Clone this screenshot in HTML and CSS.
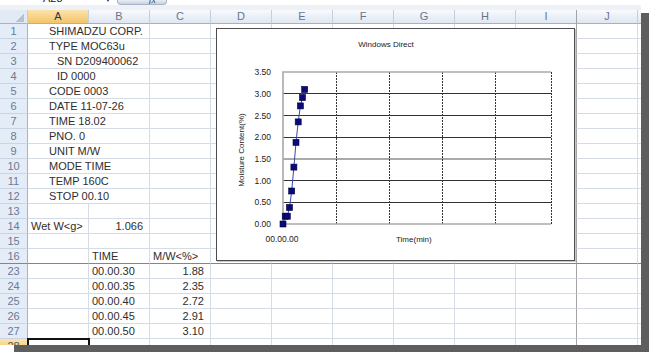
FILE: index.html
```html
<!DOCTYPE html>
<html lang="ja">
<head>
  <meta charset="UTF-8" />
  <title>MOC63u - Excel</title>
  <link rel="stylesheet" href="styles.css">
</head>
<body>

<div class="window">
  <div class="formula-bar">
    <span class="name-box">A28</span>
    <span class="name-arrow">▼</span>
    <span class="fx-btn"><i>fx</i></span>
  </div>

  <table class="grid">
    <colgroup>
      <col class="c-hdr"><col span="10" class="c-col"><col class="c-rest">
    </colgroup>
    <thead>
      <tr><th class="corner"></th><th class="sel">A</th><th>B</th><th>C</th><th>D</th><th>E</th><th>F</th><th>G</th><th>H</th><th>I</th><th>J</th><th></th></tr>
    </thead>
    <tbody>
      <tr><th>1</th><td colspan="2" class="ind">SHIMADZU CORP.</td><td></td><td></td><td></td><td></td><td></td><td></td><td></td><td></td><td></td></tr>
      <tr><th>2</th><td colspan="2" class="ind">TYPE MOC63u</td><td></td><td></td><td></td><td></td><td></td><td></td><td></td><td></td><td></td></tr>
      <tr><th>3</th><td colspan="2" class="ind2">SN D209400062</td><td></td><td></td><td></td><td></td><td></td><td></td><td></td><td></td><td></td></tr>
      <tr><th>4</th><td colspan="2" class="ind2">ID 0000</td><td></td><td></td><td></td><td></td><td></td><td></td><td></td><td></td><td></td></tr>
      <tr><th>5</th><td colspan="2" class="ind">CODE 0003</td><td></td><td></td><td></td><td></td><td></td><td></td><td></td><td></td><td></td></tr>
      <tr><th>6</th><td colspan="2" class="ind">DATE 11-07-26</td><td></td><td></td><td></td><td></td><td></td><td></td><td></td><td></td><td></td></tr>
      <tr><th>7</th><td colspan="2" class="ind">TIME 18.02</td><td></td><td></td><td></td><td></td><td></td><td></td><td></td><td></td><td></td></tr>
      <tr><th>8</th><td colspan="2" class="ind">PNO. 0</td><td></td><td></td><td></td><td></td><td></td><td></td><td></td><td></td><td></td></tr>
      <tr><th>9</th><td colspan="2" class="ind">UNIT M/W</td><td></td><td></td><td></td><td></td><td></td><td></td><td></td><td></td><td></td></tr>
      <tr><th>10</th><td colspan="2" class="ind">MODE TIME</td><td></td><td></td><td></td><td></td><td></td><td></td><td></td><td></td><td></td></tr>
      <tr><th>11</th><td colspan="2" class="ind">TEMP 160C</td><td></td><td></td><td></td><td></td><td></td><td></td><td></td><td></td><td></td></tr>
      <tr><th>12</th><td colspan="2" class="ind">STOP 00.10</td><td></td><td></td><td></td><td></td><td></td><td></td><td></td><td></td><td></td></tr>
      <tr><th>13</th><td></td><td></td><td></td><td></td><td></td><td></td><td></td><td></td><td></td><td></td><td></td></tr>
      <tr><th>14</th><td>Wet W&lt;g&gt;</td><td class="num">1.066</td><td></td><td></td><td></td><td></td><td></td><td></td><td></td><td></td><td></td></tr>
      <tr><th>15</th><td></td><td></td><td></td><td></td><td></td><td></td><td></td><td></td><td></td><td></td><td></td></tr>
      <tr class="split"><th>16</th><td></td><td>TIME</td><td>M/W&lt;%&gt;</td><td></td><td></td><td></td><td></td><td></td><td></td><td></td><td></td></tr>
      <tr><th>23</th><td></td><td>00.00.30</td><td class="num">1.88</td><td></td><td></td><td></td><td></td><td></td><td></td><td></td><td></td></tr>
      <tr><th>24</th><td></td><td>00.00.35</td><td class="num">2.35</td><td></td><td></td><td></td><td></td><td></td><td></td><td></td><td></td></tr>
      <tr><th>25</th><td></td><td>00.00.40</td><td class="num">2.72</td><td></td><td></td><td></td><td></td><td></td><td></td><td></td><td></td></tr>
      <tr><th>26</th><td></td><td>00.00.45</td><td class="num">2.91</td><td></td><td></td><td></td><td></td><td></td><td></td><td></td><td></td></tr>
      <tr><th>27</th><td></td><td>00.00.50</td><td class="num">3.10</td><td></td><td></td><td></td><td></td><td></td><td></td><td></td><td></td></tr>
      <tr><th class="sel">28</th><td class="active"></td><td></td><td></td><td></td><td></td><td></td><td></td><td></td><td></td><td></td><td></td></tr>
    </tbody>
  </table>

  <!-- embedded chart floats over columns D..I -->
  <div class="chart">
    <svg width="357" height="231" viewBox="0 0 357 231">
      <text class="title" x="169" y="18">Windows Direct</text>

      <!-- horizontal grid -->
      <g class="hgrid">
        <line x1="66" y1="64.5" x2="334" y2="64.5"/>
        <line x1="66" y1="86.5" x2="334" y2="86.5"/>
        <line x1="66" y1="108.5" x2="334" y2="108.5"/>
        <line x1="66" y1="151.5" x2="334" y2="151.5"/>
        <line x1="66" y1="173.5" x2="334" y2="173.5"/>
      </g>
      <line class="hgrid-soft" x1="66" y1="130" x2="334" y2="130"/>

      <!-- vertical dashed grid -->
      <g class="vgrid">
        <line x1="119.5" y1="43" x2="119.5" y2="195"/>
        <line x1="172.5" y1="43" x2="172.5" y2="195"/>
        <line x1="225.5" y1="43" x2="225.5" y2="195"/>
        <line x1="278.5" y1="43" x2="278.5" y2="195"/>
        <line x1="334.5" y1="43" x2="334.5" y2="195"/>
      </g>

      <!-- plot frame -->
      <polyline class="frame" points="334,43 66,43 66,195 334,195"/>

      <g class="ylab">
        <text x="54" y="46">3.50</text>
        <text x="54" y="68">3.00</text>
        <text x="54" y="90">2.50</text>
        <text x="54" y="111">2.00</text>
        <text x="54" y="133">1.50</text>
        <text x="54" y="155">1.00</text>
        <text x="54" y="176">0.50</text>
        <text x="54" y="198">0.00</text>
      </g>

      <text class="xlab" x="65" y="213">00.00.00</text>
      <text class="axis" x="179" y="213">Time(min)</text>
      <text class="axis ytitle" transform="translate(27 121) rotate(-90)">Moisture Content(%)</text>

      <polyline class="series" points="66,195 68.2,187.2 70.3,187.2 72.5,178.5 74.7,162 76.9,138.1 79,113.4 81.2,92.9 83.4,76.9 85.5,68.6 87.7,60.4"/>
      <g class="marks">
        <rect x="63" y="192" width="6" height="6"/>
        <rect x="65.2" y="184.2" width="6" height="6"/>
        <rect x="67.3" y="184.2" width="6" height="6"/>
        <rect x="69.5" y="175.5" width="6" height="6"/>
        <rect x="71.7" y="159" width="6" height="6"/>
        <rect x="73.9" y="135.1" width="6" height="6"/>
        <rect x="76" y="110.4" width="6" height="6"/>
        <rect x="78.2" y="89.9" width="6" height="6"/>
        <rect x="80.4" y="73.9" width="6" height="6"/>
        <rect x="82.5" y="65.6" width="6" height="6"/>
        <rect x="84.7" y="57.4" width="6" height="6"/>
      </g>
    </svg>
  </div>
</div>

</body>
</html>
```

FILE: styles.css
```css
* { box-sizing: border-box; margin: 0; padding: 0; }
body { background: #fff; font-family: "Liberation Sans", Arial, sans-serif; width: 649px; height: 352px; overflow: hidden; }

/* sheet window with its dark drop shadow on right/bottom */
.window { position: relative; width: 641px; height: 345px; background: #fff; overflow: hidden; box-shadow: 11px 10px 0 -3px #5e5e5e; }

/* formula bar, mostly scrolled off the top */
.formula-bar { height: 10px; display: flex; align-items: flex-start; overflow: hidden; background: linear-gradient(#fff 0 5px, #eef1f6 5px); }
.name-box { margin: -8px 0 0 43px; font-size: 11px; line-height: 12px; color: #222; width: 60px; }
.name-arrow { margin: -4px 0 0 2px; font-size: 6px; line-height: 8px; color: #222; width: 12px; }
.fx-btn { width: 50px; height: 5px; border: 1px solid #a9b5c6; border-top: none; border-radius: 0 0 4px 4px; background: linear-gradient(#e8edf4, #c8d2df); display: flex; justify-content: flex-end; overflow: hidden; }
.fx-btn i { font-family: "Liberation Serif", serif; font-size: 10px; line-height: 6px; margin: -3px 10px 0 0; color: #445; }

/* grid */
.grid { border-collapse: separate; border-spacing: 0; table-layout: fixed; width: 650px; font-size: 11px; color: #2e2e2e; }
.c-hdr { width: 28px; }
.c-col { width: 61px; }
.c-rest { width: 12px; }
.grid th, .grid td { height: 15px; padding: 0 3px; line-height: 14px; white-space: nowrap; overflow: visible; font-weight: normal; text-align: left; border-right: 1px solid #d6dce6; border-bottom: 1px solid #d6dce6; }
.grid thead th { height: 14px; line-height: 13px; text-align: center; color: #66758d; background: linear-gradient(#f8fafd, #dfe7f2); border-right: 1px solid #c4cfdc; border-bottom: 1px solid #9fb3c9; }
.grid thead th.sel { background: linear-gradient(#fbe3ad, #f3c46a); color: #333; }
.grid thead th.corner { background: #e2eaf5 linear-gradient(135deg, transparent 50%, #b5c2d3 50%) no-repeat right 3px bottom 1px / 9px 9px; }
.grid tbody th { padding: 0; text-align: center; color: #6a7a95; background: #e4ecf7; border-right: 1px solid #9fb3c9; border-bottom: 1px solid #c9d5e3; }
.grid tbody th.sel { background: linear-gradient(#fbe3ad, #f3c46a); color: #555; }
.grid th:nth-last-child(3), .grid td:nth-last-child(3) { border-right-color: #a3a3a3; }

.grid td.ind { padding-left: 21px; }
.grid td.ind2 { padding-left: 29px; }
.grid td.num { text-align: right; padding-right: 6px; }
.grid tr.split th, .grid tr.split td { border-bottom-color: #858585; }
.grid td.active { outline: 2px solid #111; outline-offset: -1px; }

/* embedded chart */
.chart { position: absolute; left: 216px; top: 28px; width: 359px; height: 233px; background: #fff; border: 1px solid #4d4d4d; box-shadow: 1px 1px 0 #c9c9c9; }
.chart svg { display: block; font-family: "Liberation Sans", Arial, sans-serif; }
.chart text { fill: #222; font-size: 8px; }
.chart .title { text-anchor: middle; }
.chart .ylab text { text-anchor: end; font-size: 8.5px; }
.chart .xlab { text-anchor: middle; font-size: 8.5px; }
.chart .ytitle { text-anchor: middle; }
.hgrid line { stroke: #333; stroke-width: 1; }
.hgrid-soft { stroke: #8e8e8e; stroke-width: 1.6; }
.vgrid line { stroke: #333; stroke-width: 1; stroke-dasharray: 2 1; }
.frame { fill: none; stroke: #a9a9a9; stroke-width: 1.6; }
.series { fill: none; stroke: #3a48a8; stroke-width: 1; }
.marks rect { fill: #0b0b78; stroke: #00004a; stroke-width: 0.6; }
```
